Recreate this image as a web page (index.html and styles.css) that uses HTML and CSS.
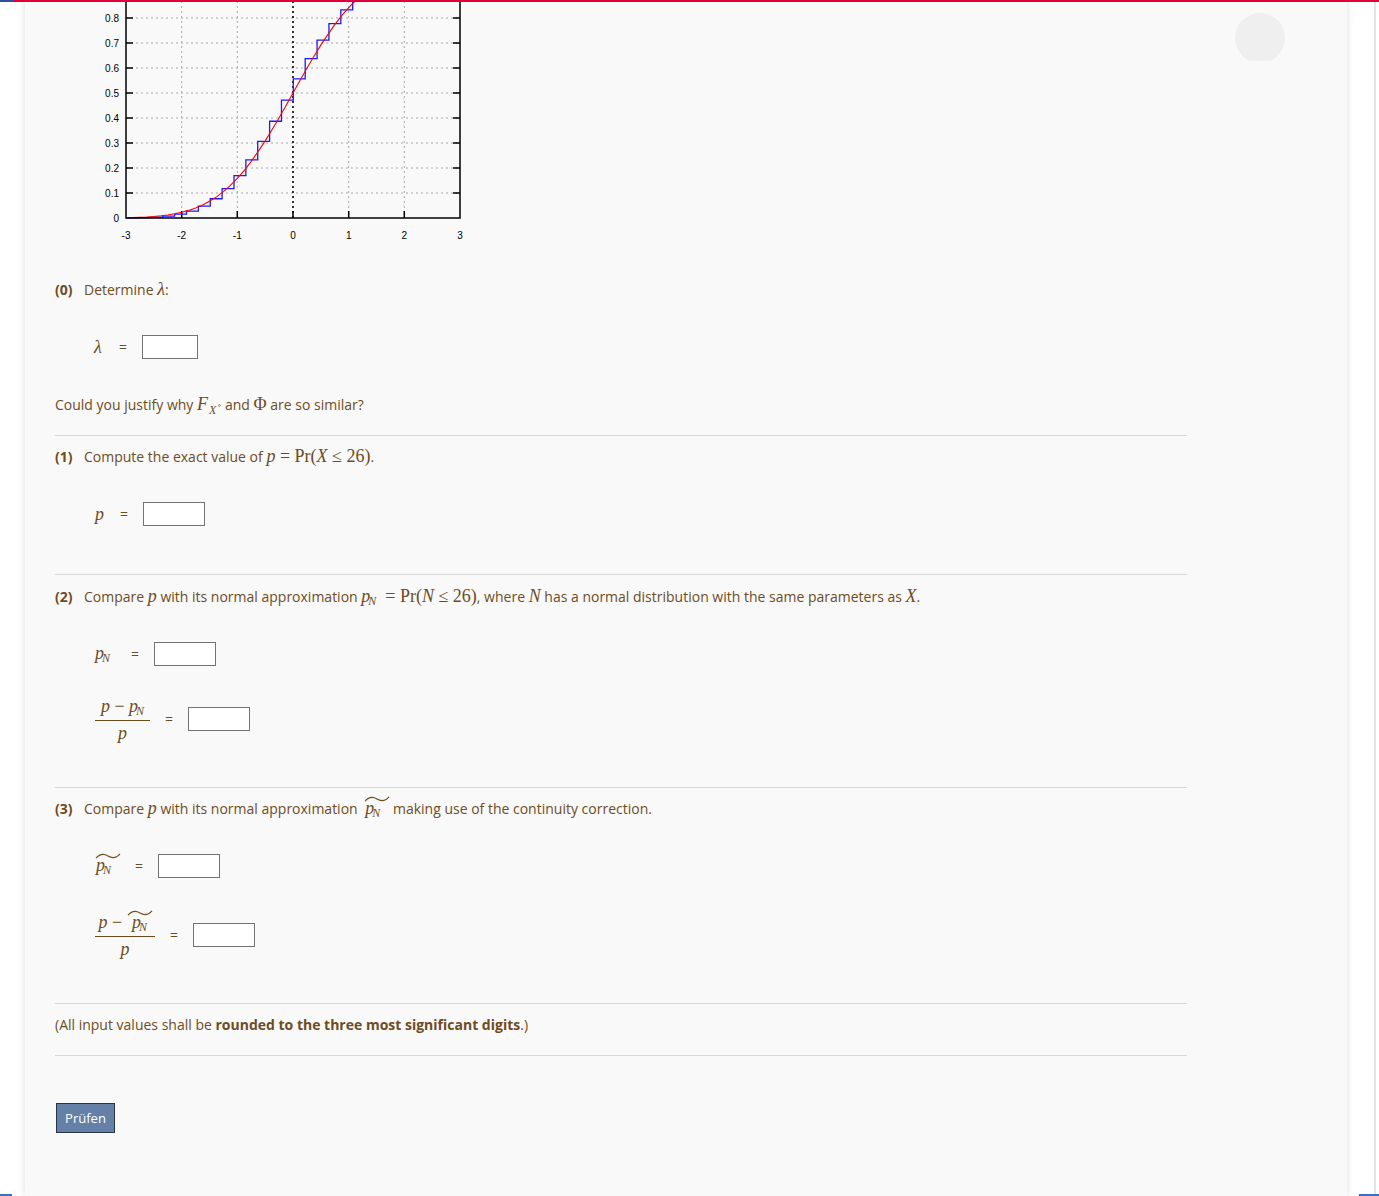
FILE: index.html
```html
<!DOCTYPE html>
<html lang="en">
<head>
<meta charset="utf-8">
<title>Poisson approximation</title>
<link rel="stylesheet" href="styles.css">
</head>
<body>
<div class="topbar"></div>
<div class="edge-line"></div>
<div class="corner-l"></div>
<div class="corner-r"></div>
<div class="page">
  <div class="avatar"></div>
  <div class="content">
    <svg class="chart" viewBox="55 0 480 250" width="480" height="250">
      <g class="grid">
        <line x1="126" y1="193" x2="460" y2="193"/>
        <line x1="126" y1="168" x2="460" y2="168"/>
        <line x1="126" y1="143" x2="460" y2="143"/>
        <line x1="126" y1="118" x2="460" y2="118"/>
        <line x1="126" y1="93" x2="460" y2="93"/>
        <line x1="126" y1="68" x2="460" y2="68"/>
        <line x1="126" y1="43" x2="460" y2="43"/>
        <line x1="126" y1="18" x2="460" y2="18"/>
        <line x1="181.7" y1="218" x2="181.7" y2="-40"/>
        <line x1="237.3" y1="218" x2="237.3" y2="-40"/>
        <line x1="348.7" y1="218" x2="348.7" y2="-40"/>
        <line x1="404.3" y1="218" x2="404.3" y2="-40"/>
      </g>
      <line class="zero" x1="293" y1="218" x2="293" y2="-40"/>
      <g class="ticks">
        <path d="M126 193h7M126 168h7M126 143h7M126 118h7M126 93h7M126 68h7M126 43h7M126 18h7"/>
        <path d="M460 193h-7M460 168h-7M460 143h-7M460 118h-7M460 93h-7M460 68h-7M460 43h-7M460 18h-7"/>
        <path d="M181.7 218v-7M237.3 218v-7M293 218v-7M348.7 218v-7M404.3 218v-7"/>
      </g>
      <path class="steps" d="M126 217.95H127.16V217.86H139.03V217.63H150.9V217.1H162.77V216.08H174.64V214.2H186.51V211.03H198.38V206.05H210.25V198.75H222.12V188.7H233.99V175.7H245.86V159.83H257.73V141.45H269.6V121.23H281.47V100.05H293.33V78.88H305.2V58.63H317.07V40.05H328.94V23.7H340.81V9.88H352.68V-1.4H364.55V-10.25H376.42V-20"/>
      <polyline class="phi" points="126,217.66 132.96,217.5 139.9,217.25 146.85,216.93 153.8,216.45 160.8,215.8 167.75,214.94 174.7,213.8 181.67,212.31 188.6,210.4 195.6,207.99 202.55,205 209.5,201.3 216.45,196.9 223.4,191.59 230.4,185.4 237.33,178.34 244.3,170.3 251.25,161.34 258.2,151.4 265.2,140.87 272.15,129.5 279.1,117.68 286.05,105.5 293,93 299.95,80.5 306.9,68.32 313.85,56.5 320.8,45.13 327.8,34.6 334.75,24.66 341.7,15.7 348.67,7.66 355.6,0.5 362.6,-5.59 376.5,-15.3"/>
      <path class="frame" d="M126 -40V218H460V-40"/>
      <g class="ylab">
        <text x="119" y="221.5">0</text>
        <text x="119" y="196.5">0.1</text>
        <text x="119" y="171.5">0.2</text>
        <text x="119" y="146.5">0.3</text>
        <text x="119" y="121.5">0.4</text>
        <text x="119" y="96.5">0.5</text>
        <text x="119" y="71.5">0.6</text>
        <text x="119" y="46.5">0.7</text>
        <text x="119" y="21.5">0.8</text>
      </g>
      <g class="xlab">
        <text x="126" y="238.5">-3</text>
        <text x="181.7" y="238.5">-2</text>
        <text x="237.3" y="238.5">-1</text>
        <text x="293" y="238.5">0</text>
        <text x="348.7" y="238.5">1</text>
        <text x="404.3" y="238.5">2</text>
        <text x="460" y="238.5">3</text>
      </g>
    </svg>

    <p class="q q0"><span class="num">(0)</span>Determine <span class="m"><i>λ</i></span>:</p>
    <div class="row r-lam">
      <span class="lbl w-lam"><span class="m"><i>λ</i></span></span>
      <span class="eq">=</span>
      <input class="ans ans-s" type="text">
    </div>
    <p class="txt justify">Could you justify why <span class="m"><i>F</i><sub class="sb"><i>X</i><sup class="ring">∘</sup></sub></span> and <span class="m">Φ</span> are so similar?</p>

    <hr class="rule r1">

    <p class="q q1"><span class="num">(1)</span>Compute the exact value of <span class="m"><i>p</i> = Pr(<i>X</i> ≤ 26)</span>.</p>
    <div class="row r-p">
      <span class="lbl w-p"><span class="m"><i>p</i></span></span>
      <span class="eq">=</span>
      <input class="ans" type="text">
    </div>

    <hr class="rule r2">

    <p class="q q2"><span class="num">(2)</span>Compare <span class="m"><i>p</i></span> with its normal approximation <span class="m"><i>p</i><sub class="sn"><i>N</i></sub> &nbsp;= Pr(<i>N</i> ≤ 26)</span>, where <span class="m"><i>N</i></span> has a normal distribution with the same parameters as <span class="m"><i>X</i></span>.</p>
    <div class="row r-pn">
      <span class="lbl w-pn"><span class="m"><i>p</i><sub class="sn"><i>N</i></sub></span></span>
      <span class="eq">=</span>
      <input class="ans" type="text">
    </div>
    <div class="row r-frac">
      <span class="lbl w-frac">
        <span class="frac">
          <span class="numr m"><i>p</i> − <i>p</i><sub class="sn"><i>N</i></sub></span>
          <span class="den m"><i>p</i></span>
        </span>
      </span>
      <span class="eq">=</span>
      <input class="ans" type="text">
    </div>

    <hr class="rule r3">

    <p class="q q3"><span class="num">(3)</span>Compare <span class="m"><i>p</i></span> with its normal approximation <span class="tilde tilde-in m"><svg class="tl" viewBox="0 0 26 6" width="26" height="6"><path d="M1 5.2C5 0.6 9 0.6 13 3S21 5.4 25 0.8"/></svg><i>p</i><sub class="sn"><i>N</i></sub></span> making use of the continuity correction.</p>
    <div class="row r-tpn">
      <span class="lbl w-tpn"><span class="tilde m"><svg class="tl" viewBox="0 0 26 6" width="26" height="6"><path d="M1 5.2C5 0.6 9 0.6 13 3S21 5.4 25 0.8"/></svg><i>p</i><sub class="sn"><i>N</i></sub></span></span>
      <span class="eq">=</span>
      <input class="ans" type="text">
    </div>
    <div class="row r-frac2">
      <span class="lbl w-frac2">
        <span class="frac">
          <span class="numr m"><i>p</i> − <span class="tilde"><svg class="tl" viewBox="0 0 26 6" width="26" height="6"><path d="M1 5.2C5 0.6 9 0.6 13 3S21 5.4 25 0.8"/></svg><i>p</i><sub class="sn"><i>N</i></sub></span></span>
          <span class="den m"><i>p</i></span>
        </span>
      </span>
      <span class="eq">=</span>
      <input class="ans" type="text">
    </div>

    <hr class="rule r4">

    <p class="txt note">(All input values shall be <b>rounded to the three most significant digits</b>.)</p>

    <hr class="rule r5">

    <button class="btn" type="button">Prüfen</button>
  </div>
</div>
</body>
</html>
```

FILE: styles.css
```css
html, body {
  margin: 0;
  padding: 0;
}
body {
  background: #ffffff;
  font-family: "Open Sans", "Liberation Sans", sans-serif;
  height: 1196px;
  overflow: hidden;
}

.topbar {
  position: fixed;
  top: 0;
  left: 0;
  right: 0;
  height: 2px;
  background: linear-gradient(to right, #2b4fa3 0, #2b4fa3 13px, #e2003b 13px, #e2003b 100%);
  z-index: 5;
}
.edge-line {
  position: fixed;
  top: 0;
  bottom: 0;
  left: 1374px;
  width: 2px;
  background: #e4e4e4;
}
.corner-l {
  position: fixed;
  left: 0;
  bottom: 0;
  width: 12px;
  height: 2px;
  background: #3a6fc4;
}
.corner-r {
  position: fixed;
  left: 1359px;
  bottom: 0;
  width: 20px;
  height: 2px;
  background: #3a6fc4;
}

.page {
  position: relative;
  margin-left: 25px;
  width: 1322px;
  min-height: 1196px;
  background: #f9f9f9;
  box-shadow: 0 0 7px rgba(0, 0, 0, 0.14);
  padding-left: 30px;
  box-sizing: border-box;
}
.avatar {
  position: absolute;
  left: 1210px;
  top: 13px;
  width: 50px;
  height: 50px;
  border-radius: 50%;
  background: #efefef;
  clip-path: inset(0 0 2px 0);
}

.content {
  width: 1132px;
  color: #6d4c1e;
  font-size: 14px;
  line-height: 20px;
}

/* chart */
.chart {
  display: block;
  overflow: hidden;
}
.grid line {
  stroke: #a8a8a8;
  stroke-width: 1;
  stroke-dasharray: 2 3;
}
.zero {
  stroke: #000;
  stroke-width: 1.6;
  stroke-dasharray: 2 3;
}
.ticks path,
.frame {
  stroke: #000;
  stroke-width: 1.5;
  fill: none;
}
.steps {
  stroke: #1a1aff;
  stroke-width: 1.3;
  fill: none;
}
.phi {
  stroke: #ff0000;
  stroke-width: 1.1;
  fill: none;
}
.ylab text,
.xlab text {
  font-family: "Liberation Sans", Arial, sans-serif;
  font-size: 10px;
  fill: #000;
}
.ylab text { text-anchor: end; }
.xlab text { text-anchor: middle; }

/* text */
.q, .txt {
  margin: 0;
  height: 20px;
  white-space: nowrap;
}
.num {
  display: inline-block;
  width: 29px;
  font-weight: 700;
}
.m {
  font-family: "Liberation Serif", "DejaVu Serif", serif;
  font-size: 18px;
  line-height: 1;
}
.m i { font-style: italic; }
.sb {
  font-size: 12px;
  vertical-align: -4px;
  line-height: 1;
  margin-left: 1px;
}
.ring {
  font-size: 8px;
  font-style: normal;
  vertical-align: 6px;
  margin-left: 1px;
}
.sn {
  font-size: 12px;
  vertical-align: -3px;
  line-height: 1;
  margin-left: -2px;
}
b { font-weight: 700; }

.tilde {
  position: relative;
  display: inline-block;
  min-width: 24px;
  padding-left: 1px;
}
.tilde-in {
  margin-left: 3px;
}
.tl {
  position: absolute;
  left: 0;
  top: -3px;
}
.tl path {
  fill: none;
  stroke: #6d4c1e;
  stroke-width: 1.1;
}

/* answer rows */
.row {
  display: flex;
  align-items: center;
  gap: 14px;
  padding-left: 40px;
}
.lbl {
  flex: none;
  display: flex;
  align-items: center;
}
.eq {
  flex: none;
  width: 10px;
  text-align: center;
  font-size: 14px;
}
.w-lam { width: 10px; }
.r-lam { padding-left: 39px; }
.w-p { width: 10px; }
.w-pn { width: 21px; }
.w-frac { width: 55px; }
.w-tpn { width: 25px; }
.w-frac2 { width: 60px; }

.ans {
  flex: none;
  box-sizing: border-box;
  width: 62px;
  height: 24px;
  margin: 0;
  padding: 0 4px;
  border: 1px solid #737373;
  border-radius: 0;
  background: #fff;
  font: 14px "Open Sans", sans-serif;
}
.ans-s { width: 56px; }

.frac {
  display: inline-flex;
  flex-direction: column;
  align-items: stretch;
  width: 100%;
}
.numr {
  display: block;
  text-align: center;
  padding: 0 0 3px;
  border-bottom: 1px solid #6d4c1e;
  white-space: pre;
}
.den {
  text-align: center;
  padding-top: 3px;
}

/* vertical rhythm */
.q0 { margin-top: 30px; }
.r-lam { margin-top: 35px; }
.justify { margin-top: 36px; }
.rule {
  border: 0;
  height: 1px;
  background: #d9d9d9;
  margin: 0;
}
.r1 { margin-top: 20px; }
.q1 { margin-top: 11px; }
.r-p { margin-top: 35px; }
.r2 { margin-top: 48px; }
.q2 { margin-top: 12px; }
.r-pn { margin-top: 35px; }
.r-frac { margin-top: 31px; height: 44px; }
.r3 { margin-top: 46px; }
.q3 { margin-top: 11px; }
.r-tpn { margin-top: 35px; }
.r-frac2 { margin-top: 33px; height: 48px; }
.r4 { margin-top: 44px; }
.note { margin-top: 11px; }
.r5 { margin-top: 20px; }

.btn {
  display: block;
  margin-top: 47px;
  margin-left: 1px;
  width: 59px;
  height: 30px;
  padding: 0;
  background: #6580a6;
  border: 1px solid #27354a;
  border-radius: 0;
  color: #ffffff;
  font: 13px "Open Sans", sans-serif;
}
```
